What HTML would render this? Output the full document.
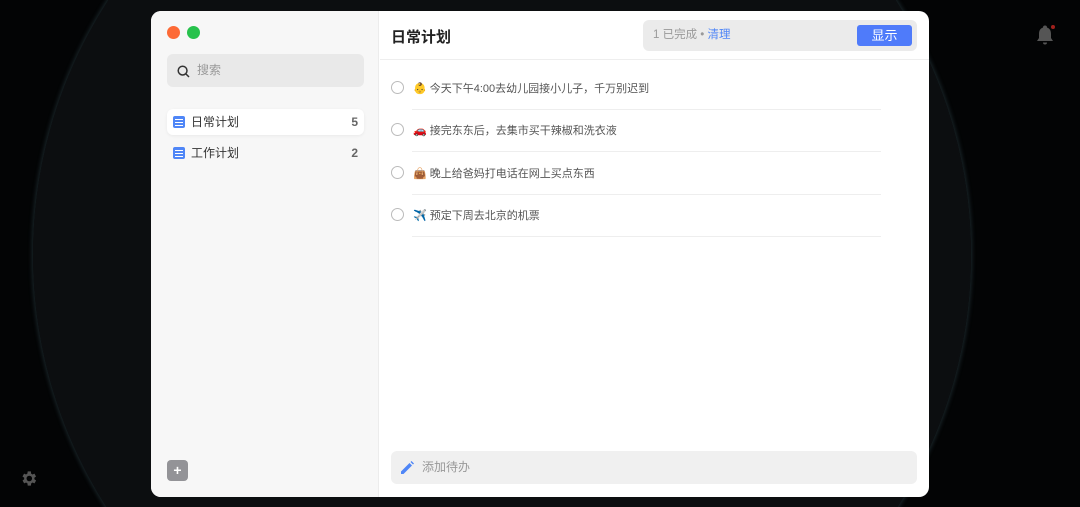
<!DOCTYPE html>
<html style="width:1080px;height:507px;overflow:hidden"><head><meta charset="utf-8"><style>
*{margin:0;padding:0;box-sizing:border-box}
body{width:1080px;height:507px;overflow:hidden;background:#030405;position:relative;font-family:"Liberation Sans","Noto Sans CJK SC",sans-serif}
.clip{position:absolute;left:0;top:0;width:1080px;height:507px;overflow:hidden}
.earth{position:absolute;left:33px;top:-214px;width:938px;height:938px;border-radius:50%;background:radial-gradient(circle at 50% 50%,#0c0e10 70%,#1a2024 88%,#323c40 97%,#4d5d61 100%);box-shadow:0 0 5px 1px rgba(90,130,140,.3)}
.win{position:absolute;left:151px;top:11px;width:778px;height:486px;border-radius:10px;background:#fff;overflow:hidden}
.side{position:absolute;left:0;top:0;width:228px;height:100%;background:#f7f7f7;border-right:1px solid #ececec}
.dot{position:absolute;top:15px;width:13px;height:13px;border-radius:50%}
.search{position:absolute;left:16px;top:43px;width:197px;height:33px;background:#e9e9e9;border-radius:6px;color:#999;font-size:12px;line-height:33px;padding-left:30px}
.item{position:absolute;left:16px;width:197px;height:26px;border-radius:6px;font-size:12px;color:#333;line-height:26px;padding-left:24px}
.item .ic{position:absolute;left:6px;top:7px;width:12px;height:12px;background:#4f86f7;border-radius:2px}
.item .ic:before{content:"";position:absolute;left:2px;top:2.5px;width:8px;height:1px;background:#fff;box-shadow:0 3px 0 #fff,0 6px 0 #fff}
.item .n{position:absolute;right:6px;top:0;color:#666;font-weight:bold;font-size:12px}
.main{position:absolute;left:229px;top:0;right:0;height:100%}
.title{position:absolute;left:11px;top:15px;font-size:15px;font-weight:bold;color:#222}
.hdr{position:absolute;left:0;right:0;top:48px;border-top:1px solid #eee}
.bar{position:absolute;left:263px;top:9px;width:274px;height:31px;background:#ebebeb;border-radius:6px;font-size:11.5px;color:#999;line-height:31px;padding-left:10px}
.bar b{font-weight:normal;color:#4f86f7}
.btn{position:absolute;right:5px;top:5px;width:55px;height:21px;background:#4f7bfa;border-radius:3px;color:#fff;font-size:13px;text-align:center;line-height:21px}
.todo{position:absolute;left:11px;width:490px;height:42px;font-size:11px;color:#555}
.todo .c{position:absolute;left:0;top:2px;width:13px;height:13px;border:1px solid #bbb;border-radius:50%}
.todo .t{position:absolute;left:22px;top:1px}
.todo .l{position:absolute;left:21px;right:0;top:30px;border-top:1px solid #eee}
.add{position:absolute;left:11px;top:440px;width:526px;height:33px;background:#f0f0f0;border-radius:6px;font-size:12px;color:#999;line-height:33px;padding-left:31px}
</style></head><body>
<div class="clip"><div class="earth"></div></div>
<svg style="position:absolute;left:19px;top:469px" width="19" height="19" viewBox="0 0 24 24"><path fill="#555" d="M19.4 13a7.8 7.8 0 000-2l2.1-1.6-2-3.5-2.5 1a7.6 7.6 0 00-1.7-1L15 3h-4l-.4 2.9a7.6 7.6 0 00-1.7 1l-2.5-1-2 3.5L6.6 11a7.8 7.8 0 000 2l-2.1 1.6 2 3.5 2.5-1a7.6 7.6 0 001.7 1L11 21h4l.4-2.9a7.6 7.6 0 001.7-1l2.5 1 2-3.5zM13 15.5a3.5 3.5 0 110-7 3.5 3.5 0 010 7z"/></svg>
<svg style="position:absolute;left:1034px;top:24px" width="24" height="22" viewBox="0 0 24 22"><path fill="#555" d="M9 3.5a2 2 0 014 0c3 1 4 3.5 4 6.5v4l2 3H3l2-3v-4c0-3 1-5.5 4-6.5zM9 18.5h4a2 2 0 01-4 0z"/><circle cx="19" cy="3" r="2" fill="#a0201c"/></svg>
<div class="win">
<div class="side">
<div class="dot" style="left:16px;background:#fd6a36"></div>
<div class="dot" style="left:36px;background:#27c24c"></div>
<div class="search"><svg style="position:absolute;left:10px;top:11px" width="13" height="13" viewBox="0 0 13 13"><circle cx="5.6" cy="5.6" r="4.4" stroke="#333" stroke-width="1.5" fill="none"/><path d="M9 9l3 3" stroke="#333" stroke-width="1.5"/></svg>搜索</div>
<div class="item" style="top:98px;background:#fff;box-shadow:0 1px 3px rgba(0,0,0,.06)"><span class="ic"></span>日常计划<span class="n">5</span></div>
<div class="item" style="top:129px"><span class="ic"></span>工作计划<span class="n">2</span></div>
<div style="position:absolute;left:16px;top:449px;width:21px;height:21px;background:#939397;border-radius:4px;color:#fff;font-weight:bold;text-align:center;line-height:21px;font-size:14px">+</div>
</div>
<div class="main">
<div class="title">日常计划</div>
<div class="bar">1 已完成 • <b>清理</b><div class="btn">显示</div></div>
<div class="hdr"></div>
<div class="todo" style="top:68px"><span class="c"></span><span class="t">👶 今天下午4:00去幼儿园接小儿子，千万别迟到</span><span class="l"></span></div>
<div class="todo" style="top:110px"><span class="c"></span><span class="t">🚗 接完东东后，去集市买干辣椒和洗衣液</span><span class="l"></span></div>
<div class="todo" style="top:153px"><span class="c"></span><span class="t">👜 晚上给爸妈打电话在网上买点东西</span><span class="l"></span></div>
<div class="todo" style="top:195px"><span class="c"></span><span class="t">✈️ 预定下周去北京的机票</span><span class="l"></span></div>
<div class="add"><svg style="position:absolute;left:9px;top:10px" width="14" height="14" viewBox="0 0 14 14"><path fill="#4f86f7" d="M1 10.5L9.5 2l2.5 2.5L3.5 13H1zM10.5 1l1-1 2.5 2.5-1 1z"/></svg>添加待办</div>
</div>
</div>
</body></html>
